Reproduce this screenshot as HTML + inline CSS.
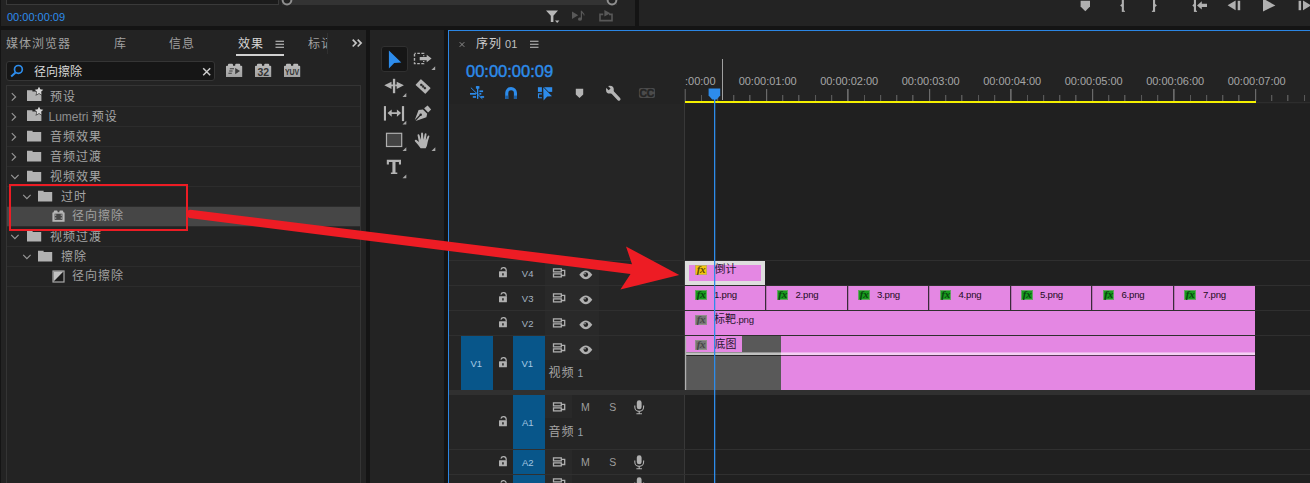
<!DOCTYPE html>
<html lang="zh"><head><meta charset="utf-8"><title>Premiere</title>
<style>
html,body{margin:0;padding:0}
body{width:1310px;height:483px;overflow:hidden;background:#232323;position:relative;font-family:"Liberation Sans","Noto Sans CJK SC",sans-serif}
#r{position:absolute;left:0;top:0;width:1310px;height:483px;overflow:hidden;background:#232323}
#r div,#r svg,#r .t{position:absolute;display:block}
#r .t{white-space:nowrap;line-height:1.5;font-family:"Liberation Sans","Noto Sans CJK SC",sans-serif}
#r .c{letter-spacing:1px}
#r .lat{font-family:"Liberation Sans","Noto Sans CJK SC",sans-serif}
#r .t span{position:static;display:inline}
</style></head><body><div id="r">
<div style="left:0px;top:26px;width:1310px;height:4px;background:#141414;"></div>
<div style="left:635px;top:0px;width:4px;height:26px;background:#141414;"></div>
<div style="left:0px;top:0px;width:1px;height:483px;background:#141414;"></div>
<div style="left:366px;top:30px;width:4px;height:453px;background:#141414;"></div>
<div style="left:444px;top:30px;width:4px;height:453px;background:#141414;"></div>
<div style="left:6px;top:-1px;width:273px;height:6px;background:#1b1b1b;border:1px solid #3a3a3a;box-sizing:border-box;"></div>
<div style="left:282px;top:0px;width:335px;height:5px;background:#333333;"></div>
<svg style="left:280px;top:-7px;" width="14" height="14" viewBox="0 0 14 14"><circle cx="7" cy="7" r="4.400" fill="#232323" stroke="#909090" stroke-width="2"/></svg>
<svg style="left:605px;top:-7px;" width="14" height="14" viewBox="0 0 14 14"><circle cx="7" cy="7" r="4.400" fill="#232323" stroke="#909090" stroke-width="2"/></svg>
<span class="t lat" style="left:7px;top:9px;font-size:11px;color:#2d8ceb;">00:00:00:09</span>
<svg style="left:545px;top:9px;" width="16" height="16" viewBox="0 0 16 16"><path d="M1 1.5h12l-4.6 5.3v6.2h-2.6v-6.2z" fill="#b8b8b8"/><path d="M10 11.5h4.4l-2.2 2.6z" fill="#b8b8b8"/></svg>
<svg style="left:571px;top:10px;" width="16" height="12" viewBox="0 0 16 12"><path d="M1 1.5l6.2 3.7L1 9z" fill="#585858"/><path d="M11 0.8v8.2a2 1.6 0 1 1-1.2-1.4V0.8z M11 0.8c.3 1.8 2.6 2 2.6 4.6h-.9c0-1.6-1.4-1.8-1.7-2.4z" fill="#585858"/></svg>
<svg style="left:598px;top:9px;" width="16" height="14" viewBox="0 0 16 14"><path d="M1.2 4.6h4v1.6H2.8v4.6h10.4V6.2H11V4.6h3.8v7.8H1.2z" fill="#585858"/><path d="M6.4 1l6 3.3-6 3.3z" fill="#585858"/></svg>
<svg style="left:1080px;top:0px;" width="11" height="12" viewBox="0 0 11 12"><path d="M0.600 0.800h9.400v5.800l-4.700 4.600-4.700-4.600z" fill="#b0b0b0"/></svg>
<svg style="left:1110px;top:0px;" width="200" height="14" viewBox="1110 0 200 14"><rect x="1123.600" y="10.700" width="1.300" height="1.200" fill="#b0b0b0"/><rect x="1151.900" y="10.700" width="1.300" height="1.200" fill="#b0b0b0"/><rect x="1195.700" y="10.700" width="1.300" height="1.200" fill="#b0b0b0"/><rect x="1121.800" y="0" width="2.100" height="11.900" fill="#b0b0b0"/><path d="M1122 3.800L1120.100 5.400 1122 7z" fill="#b0b0b0"/><rect x="1153" y="0" width="2.100" height="11.900" fill="#b0b0b0"/><path d="M1155 3.800L1156.900 5.400 1155 7z" fill="#b0b0b0"/><rect x="1193.900" y="0" width="2.100" height="11.900" fill="#b0b0b0"/><path d="M1194 3.800L1192.300 5.400 1194 7z" fill="#b0b0b0"/><path d="M1197 5.400l4.800-4.200v2.500h5.200v3.400h-5.200v2.500z" fill="#b0b0b0"/><path d="M1227.600 5.300l8-4.900v9.800z" fill="#b0b0b0"/><rect x="1237.700" y="0.800" width="2.500" height="9.400" fill="#b0b0b0"/><path d="M1263 -1.500L1275.400 5.500 1263 11.400z" fill="#b0b0b0"/><rect x="1298.600" y="0.800" width="2.500" height="9.400" fill="#b0b0b0"/><path d="M1303 0.400l8 4.900-8 4.900z" fill="#b0b0b0"/></svg>
<span class="t  c" style="left:6px;top:35px;font-size:12px;color:#a0a0a0;">媒体浏览器</span>
<span class="t  c" style="left:114px;top:35px;font-size:12px;color:#a0a0a0;">库</span>
<span class="t  c" style="left:169px;top:35px;font-size:12px;color:#a0a0a0;">信息</span>
<span class="t  c" style="left:238px;top:35px;font-size:12px;color:#d6d6d6;">效果</span>
<svg style="left:275px;top:40px;" width="10" height="9" viewBox="0 0 10 9"><path d="M0.5 1.2h8.5M0.5 4.2h8.5M0.5 7.2h8.5" stroke="#d0d0d0" stroke-width="1.1"/></svg>
<div style="left:236px;top:54px;width:48px;height:2px;background:#d0d0d0;"></div>
<span class="t" style="left:308px;top:35px;font-size:12px;letter-spacing:1px;color:#a0a0a0;width:18.5px;overflow:hidden;height:20px">标记</span>
<div style="left:327px;top:33px;width:1px;height:21px;background:#303030;"></div>
<svg style="left:351px;top:38px;" width="12" height="10" viewBox="0 0 12 10"><path d="M1.700 1.700l3.400 3.400-3.400 3.400M6.700 1.700l3.400 3.400-3.400 3.400" stroke="#c4c4c4" stroke-width="1.700" fill="none"/></svg>
<div style="left:6px;top:61px;width:209px;height:20px;background:#161616;border:1px solid #353535;border-radius:3px;box-sizing:border-box;"></div>
<svg style="left:10px;top:64px;" width="14" height="14" viewBox="0 0 14 14"><circle cx="8.4" cy="5.4" r="3.9" fill="none" stroke="#2d8ceb" stroke-width="1.7"/><path d="M5.6 8.4L1.2 12.4" stroke="#2d8ceb" stroke-width="2"/></svg>
<span class="t " style="left:34px;top:63px;font-size:12px;color:#d8d8d8;">径向擦除</span>
<svg style="left:202px;top:67px;" width="10" height="10" viewBox="0 0 10 10"><path d="M1.200 1.200l7 7M8.200 1.200l-7 7" stroke="#cccccc" stroke-width="1.500"/></svg>
<svg style="left:225px;top:63px;" width="19" height="15" viewBox="0 0 19 15"><defs><linearGradient id="bg225" x1="0" y1="0" x2="0" y2="1"><stop offset="0" stop-color="#bcbcbc"/><stop offset="1" stop-color="#a2a2a2"/></linearGradient></defs><path d="M1 3.400Q1 2.700 2 2.700h1V1.700Q3 .7 4 .7h3Q8 .7 8 1.700v1h2.200v-1Q10.200 .7 11.200 .7h3Q15.200 .7 15.200 1.700v1h1Q17.200 2.700 17.200 3.400V14H1z" fill="url(#bg225)"/></svg>
<svg style="left:254px;top:63px;" width="19" height="15" viewBox="0 0 19 15"><defs><linearGradient id="bg254" x1="0" y1="0" x2="0" y2="1"><stop offset="0" stop-color="#bcbcbc"/><stop offset="1" stop-color="#a2a2a2"/></linearGradient></defs><path d="M1 3.400Q1 2.700 2 2.700h1V1.700Q3 .7 4 .7h3Q8 .7 8 1.700v1h2.200v-1Q10.200 .7 11.200 .7h3Q15.200 .7 15.200 1.700v1h1Q17.200 2.700 17.200 3.400V14H1z" fill="url(#bg254)"/></svg>
<svg style="left:283px;top:63px;" width="19" height="15" viewBox="0 0 19 15"><defs><linearGradient id="bg283" x1="0" y1="0" x2="0" y2="1"><stop offset="0" stop-color="#bcbcbc"/><stop offset="1" stop-color="#a2a2a2"/></linearGradient></defs><path d="M1 3.400Q1 2.700 2 2.700h1V1.700Q3 .7 4 .7h3Q8 .7 8 1.700v1h2.200v-1Q10.200 .7 11.200 .7h3Q15.200 .7 15.200 1.700v1h1Q17.200 2.700 17.200 3.400V14H1z" fill="url(#bg283)"/></svg>
<svg style="left:225px;top:63px;" width="19" height="15" viewBox="0 0 19 15"><path d="M4.800 5.800h4.200M4.200 8h3.400M3.400 10.200h3.400" stroke="#3c3c3c" stroke-width="1.100"/><path d="M10.200 5l4.800 3.100-4.800 3.100z" fill="#3c3c3c"/></svg>
<span class="t lat" style="left:257.5px;top:64.5px;font-size:10.5px;font-weight:bold;color:#333;letter-spacing:0px">32</span>
<span class="t lat" style="left:285.3px;top:65.5px;font-size:9px;font-weight:bold;color:#333;letter-spacing:-.2px;transform:scaleX(.78);transform-origin:0 0">YUV</span>
<div style="left:6px;top:85px;width:355px;height:400px;background:transparent;border:1px solid #343434;box-sizing:border-box;"></div>
<div style="left:7px;top:106px;width:353px;height:1px;background:#2c2c2c;"></div>
<div style="left:7px;top:126px;width:353px;height:1px;background:#2c2c2c;"></div>
<div style="left:7px;top:146px;width:353px;height:1px;background:#2c2c2c;"></div>
<div style="left:7px;top:166px;width:353px;height:1px;background:#2c2c2c;"></div>
<div style="left:7px;top:186px;width:353px;height:1px;background:#2c2c2c;"></div>
<div style="left:7px;top:206px;width:353px;height:1px;background:#2c2c2c;"></div>
<div style="left:7px;top:226px;width:353px;height:1px;background:#2c2c2c;"></div>
<div style="left:7px;top:246px;width:353px;height:1px;background:#2c2c2c;"></div>
<div style="left:7px;top:266px;width:353px;height:1px;background:#2c2c2c;"></div>
<div style="left:7px;top:286px;width:353px;height:1px;background:#2c2c2c;"></div>
<div style="left:7px;top:207px;width:353px;height:19px;background:#464646;"></div>
<svg style="left:11px;top:92px;" width="7" height="10" viewBox="0 0 7 10"><path d="M0.8 1.2l3.8 3.7L0.8 8.600" stroke="#989898" stroke-width="1.15" fill="none"/></svg>
<svg style="left:27px;top:86.5px;" width="17" height="14" viewBox="0 0 17 14"><path d="M0 3.2h5.4v1.3H14.4V14H0z" fill="#b2b2b2"/><path d="M12 -0.4l1.3 2.7 3 .4-2.2 2.05.55 2.95L12 6.200l-2.650 1.500.55-2.950-2.200-2.050 3-.4z" fill="#d4d4d4" stroke="#232323" stroke-width="1.1" paint-order="stroke"/></svg>
<span class="t  c" style="left:50px;top:88px;font-size:12px;color:#a6a6a6;">预设</span>
<svg style="left:11px;top:112px;" width="7" height="10" viewBox="0 0 7 10"><path d="M0.8 1.2l3.8 3.7L0.8 8.600" stroke="#989898" stroke-width="1.15" fill="none"/></svg>
<svg style="left:27px;top:106.5px;" width="17" height="14" viewBox="0 0 17 14"><path d="M0 3.2h5.4v1.3H14.4V14H0z" fill="#b2b2b2"/><path d="M12 -0.4l1.3 2.7 3 .4-2.2 2.05.55 2.95L12 6.200l-2.650 1.500.55-2.950-2.200-2.050 3-.4z" fill="#d4d4d4" stroke="#232323" stroke-width="1.1" paint-order="stroke"/></svg>
<span class="t  c" style="left:48.5px;top:108px;font-size:12px;color:#a6a6a6;"><span class="lat" style="font-size:12px;letter-spacing:0;color:#8e8e8e">Lumetri </span>预设</span>
<svg style="left:11px;top:132px;" width="7" height="10" viewBox="0 0 7 10"><path d="M0.8 1.2l3.8 3.7L0.8 8.600" stroke="#989898" stroke-width="1.15" fill="none"/></svg>
<svg style="left:27px;top:129.5px;" width="15" height="12" viewBox="0 0 15 12"><path d="M0 0.700h5.600v1.300H14.200V11.500H0z" fill="#b2b2b2"/></svg>
<span class="t  c" style="left:50px;top:128px;font-size:12px;color:#a6a6a6;">音频效果</span>
<svg style="left:11px;top:152px;" width="7" height="10" viewBox="0 0 7 10"><path d="M0.8 1.2l3.8 3.7L0.8 8.600" stroke="#989898" stroke-width="1.15" fill="none"/></svg>
<svg style="left:27px;top:149.5px;" width="15" height="12" viewBox="0 0 15 12"><path d="M0 0.700h5.600v1.300H14.200V11.500H0z" fill="#b2b2b2"/></svg>
<span class="t  c" style="left:50px;top:148px;font-size:12px;color:#a6a6a6;">音频过渡</span>
<svg style="left:9.5px;top:173.5px;" width="10" height="7" viewBox="0 0 10 7"><path d="M1.2 0.8l3.7 3.8L8.600 0.8" stroke="#989898" stroke-width="1.15" fill="none"/></svg>
<svg style="left:27px;top:169.5px;" width="15" height="12" viewBox="0 0 15 12"><path d="M0 0.700h5.600v1.300H14.200V11.500H0z" fill="#b2b2b2"/></svg>
<span class="t  c" style="left:50px;top:168px;font-size:12px;color:#a6a6a6;">视频效果</span>
<svg style="left:22.0px;top:193.5px;" width="10" height="7" viewBox="0 0 10 7"><path d="M1.2 0.8l3.7 3.8L8.600 0.8" stroke="#989898" stroke-width="1.15" fill="none"/></svg>
<svg style="left:38px;top:189.5px;" width="15" height="12" viewBox="0 0 15 12"><path d="M0 0.700h5.600v1.300H14.200V11.500H0z" fill="#b2b2b2"/></svg>
<span class="t  c" style="left:61px;top:188px;font-size:12px;color:#a6a6a6;">过时</span>
<svg style="left:51.5px;top:210.2px;" width="14" height="13" viewBox="0 0 14 13"><path d="M0.400 2.900Q.4 2.200 1.200 2.200h.6V1.300Q1.800 .5 2.600 .5h2.200Q5.600 .5 5.600 1.300v.9h1.800v-.9Q7.400 .5 8.200 .5h2.200Q11.200 .5 11.200 1.300v.9h.6Q12.600 2.200 12.600 2.900V11.800H.4z" fill="#b6b6b6"/><rect x="2.600" y="3.700" width="7.800" height="6.200" fill="#464646"/><path d="M3.700 4.600v1.200M3.700 7.600v1.200M9.300 4.600v1.200M9.300 7.600v1.200" stroke="#b6b6b6" stroke-width="1.100"/></svg>
<span class="t  c" style="left:72px;top:207px;font-size:12px;color:#a0a0a0;">径向擦除</span>
<svg style="left:9.5px;top:233.5px;" width="10" height="7" viewBox="0 0 10 7"><path d="M1.2 0.8l3.7 3.8L8.600 0.8" stroke="#989898" stroke-width="1.15" fill="none"/></svg>
<svg style="left:27px;top:229.5px;" width="15" height="12" viewBox="0 0 15 12"><path d="M0 0.700h5.600v1.300H14.200V11.500H0z" fill="#b2b2b2"/></svg>
<span class="t  c" style="left:50px;top:228px;font-size:12px;color:#a6a6a6;">视频过渡</span>
<svg style="left:22.0px;top:253.5px;" width="10" height="7" viewBox="0 0 10 7"><path d="M1.2 0.8l3.7 3.8L8.600 0.8" stroke="#989898" stroke-width="1.15" fill="none"/></svg>
<svg style="left:38px;top:249.5px;" width="15" height="12" viewBox="0 0 15 12"><path d="M0 0.700h5.600v1.300H14.200V11.500H0z" fill="#b2b2b2"/></svg>
<span class="t  c" style="left:61px;top:248px;font-size:12px;color:#a6a6a6;">擦除</span>
<svg style="left:51.5px;top:269.5px;" width="14" height="14" viewBox="0 0 14 14"><rect x="1" y="1" width="11" height="11" fill="#1c1c1c" stroke="#a8a8a8" stroke-width="1.200"/><path d="M1.600 1.600H11.400L1.600 11.400z" fill="#c2c2c2"/></svg>
<span class="t  c" style="left:72px;top:267px;font-size:12px;color:#a0a0a0;">径向擦除</span>
<div style="left:380.5px;top:46.2px;width:27px;height:25.4px;background:#161616;border:1px solid #303030;border-radius:3px;box-sizing:border-box;"></div>
<svg style="left:370px;top:30px;" width="74" height="160" viewBox="370 30 74 160"><path d="M388.900 50.500L401.300 62.500 394.200 63.100 388.900 68.500z" fill="#2d8ceb"/><rect x="414.500" y="53.400" width="9.200" height="10.200" fill="none" stroke="#b4b4b4" stroke-width="1.400" stroke-dasharray="2.600 1.500" stroke-dashoffset="1.300"/><path d="M419.700 56.900h7V54.800l4.900 3.750-4.900 3.750V60.200h-7z" fill="#b4b4b4" stroke="#232323" stroke-width="1.400" paint-order="stroke"/><path d="M435.2 66.2v3.800h-3.800z" fill="#a6a6a6"/><path d="M384.300 85.350l7.200-3.600v2.750h1.500v1.700h-1.500v2.750z M403.900 85.350l-7.200-3.600v2.750h-1.500v1.700h1.500v2.750z" fill="#b4b4b4"/><rect x="392.900" y="78.800" width="2.300" height="14.400" fill="#b4b4b4"/><path d="M406.29999999999995 93.1v3.800h-3.800z" fill="#a6a6a6"/><g transform="translate(423.100 86.500) rotate(43)"><rect x="-6.750" y="-4" width="13.500" height="8" rx=".6" fill="#b4b4b4"/><path d="M-3.600 0l1.200-1.100 1.200 1.100 1.200-1.100 1.200 1.100 1.200-1.100 1.200 1.100-1.200 1.100-1.200-1.100-1.200 1.100-1.200-1.100-1.200 1.100z" fill="#232323" stroke="#232323" stroke-width=".5"/></g><rect x="383.900" y="106.100" width="2.100" height="14.500" fill="#b4b4b4"/><rect x="401.900" y="106.100" width="2.200" height="15" fill="#b4b4b4"/><path d="M387.500 113.100l4.200-3.600v2.800h5.200v-2.800l4.200 3.600-4.200 3.600v-2.800h-5.200v2.800z" fill="#b4b4b4"/><path d="M406.29999999999995 120.7v3.800h-3.800z" fill="#a6a6a6"/><path d="M424.100 108.300l3.500-2.800 3.500 4.100-3 3z" fill="#b4b4b4"/><path d="M422.900 109.400l4.300 4.300-.8 3.600-10.800 3.600 4.700-5a1.250 1.250 0 1 0-.8-.8l-4.700 5 3.800-10z" fill="#b4b4b4"/><rect x="386.500" y="133.300" width="15.200" height="13.200" fill="#444" stroke="#b0b0b0" stroke-width="1.200"/><path d="M406.29999999999995 147.2v3.800h-3.800z" fill="#a6a6a6"/><path d="M420.600 148.200c-1.300-1.800-3.300-4.300-5.500-6.700-.9-1 .3-2.200 1.400-1.400l2.400 1.900-1.300-6.500c-.3-1.300 1.400-1.700 1.800-.5l1.500 4.800.2-6.400c0-1.300 1.800-1.300 1.900 0l.5 6.300 1.200-5.800c.3-1.200 2-.9 1.800.4l-.7 6 1.900-4.300c.5-1.100 2-.5 1.600.7-1.100 3-1.600 5.300-2 7.400-.3 1.500-.7 2.900-1.600 4.100z" fill="#b4b4b4"/><path d="M435.29999999999995 147.2v3.800h-3.800z" fill="#a6a6a6"/><path d="M386.800 159.800H401v4.600h-2.100V162h-3.400v10.400h1.800V174h-6.400v-1.600h1.500V162h-3.500v2.400h-2.100z" fill="#b4b4b4"/><path d="M406.29999999999995 174.4v3.800h-3.800z" fill="#a6a6a6"/></svg>
<div style="left:448px;top:30px;width:862px;height:1px;background:#2b86e4;"></div>
<div style="left:448px;top:30px;width:1px;height:453px;background:#2b86e4;"></div>
<svg style="left:459px;top:41px;" width="7" height="7" viewBox="0 0 7 7"><path d="M0.700 1.200l4.600 4.600M5.300 1.200l-4.600 4.600" stroke="#8c8c8c" stroke-width="1"/></svg>
<span class="t" style="left:476px;top:35px;font-size:12px;letter-spacing:1px;color:#cfcfcf">序列<span class="lat" style="font-size:11px;margin-left:3px;letter-spacing:0;color:#c0c0c0">01</span></span>
<svg style="left:530px;top:40px;" width="10" height="9" viewBox="0 0 10 9"><path d="M0 1.2h8.500M0 4.200h8.500M0 7.200h8.500" stroke="#c4c4c4" stroke-width="1.1"/></svg>
<span class="t lat" style="left:466px;top:59px;font-size:16.5px;color:#2d8ceb;-webkit-text-stroke:.4px #2d8ceb;letter-spacing:0px">00:00:00:09</span>
<svg style="left:460px;top:80px;" width="210" height="30" viewBox="460 80 210 30"><rect x="475.900" y="86.100" width="3.500" height="2.600" fill="#2d8ceb"/><rect x="477" y="86.200" width="1.300" height="12.700" fill="#2d8ceb"/><rect x="479.400" y="90.400" width="3.700" height="1.700" fill="#2d8ceb"/><rect x="470" y="93" width="5.900" height="1.700" fill="#2d8ceb"/><rect x="479.400" y="93" width="1.900" height="1.700" fill="#2d8ceb"/><rect x="472.800" y="96.100" width="3.200" height="1.700" fill="#2d8ceb"/><rect x="480.500" y="96.100" width="3.600" height="1.700" fill="#2d8ceb"/><path d="M470.900 87.700L482.400 98.900" stroke="#2d8ceb" stroke-width="1"/><path d="M505.200 99V92.900a5.900 5.900 0 0 1 11.800 0V99h-3.100V93a2.800 2.800 0 0 0-5.600 0V99z" fill="#2d8ceb"/><rect x="505.200" y="95.600" width="3.100" height="3.400" fill="#1d5fa3"/><rect x="513.900" y="95.600" width="3.100" height="3.400" fill="#1d5fa3"/><rect x="537.900" y="87.200" width="4" height="4.700" fill="#2d8ceb"/><path d="M541.900 93.900h-3.400v3.900h3.400" fill="none" stroke="#2d8ceb" stroke-width="1.100"/><rect x="543" y="87.200" width="9.200" height="4.700" fill="#2d8ceb"/><path d="M543.200 87.300L552 96.200 547.200 96.500 543.600 100.400z" fill="#2d8ceb" stroke="#232323" stroke-width="1.300" paint-order="stroke"/><path d="M575.800 88.700h7.400v5.800l-3.700 3.600-3.700-3.600z" fill="#b4b4b4"/><path d="M611.600 91.400L618.900 99.100" stroke="#b4b4b4" stroke-width="3.300" stroke-linecap="round"/><circle cx="609.900" cy="89.700" r="3.900" fill="#b4b4b4"/><path d="M609.600 89.400L604.600 84.400" stroke="#232323" stroke-width="2.700"/><rect x="638.900" y="88.100" width="16.100" height="9.900" rx="2" fill="#4b4b4b"/><text x="646.800" y="96.800" font-family="Liberation Sans, sans-serif" font-weight="bold" font-size="10.500" text-anchor="middle" fill="#242424" stroke="#242424" stroke-width=".4" letter-spacing="-.3">CC</text></svg>
<svg style="left:448px;top:0px;" width="862" height="110" viewBox="0 0 862 110"><rect x="236" y="89" width="1" height="12" fill="#6a6a6a"/><rect x="237" y="89" width="1" height="12" fill="#6a6a6a" opacity="0.70"/><rect x="253" y="95" width="1" height="6" fill="#585858"/><rect x="254" y="95" width="1" height="6" fill="#585858" opacity="0.00"/><rect x="269" y="95" width="1" height="6" fill="#585858"/><rect x="270" y="95" width="1" height="6" fill="#585858" opacity="0.18"/><rect x="285" y="95" width="1" height="6" fill="#585858"/><rect x="286" y="95" width="1" height="6" fill="#585858" opacity="0.36"/><rect x="301" y="95" width="1" height="6" fill="#585858"/><rect x="302" y="95" width="1" height="6" fill="#585858" opacity="0.54"/><rect x="318" y="89" width="1" height="12" fill="#6a6a6a"/><rect x="319" y="89" width="1" height="12" fill="#6a6a6a" opacity="0.20"/><rect x="334" y="95" width="1" height="6" fill="#585858"/><rect x="335" y="95" width="1" height="6" fill="#585858" opacity="0.30"/><rect x="350" y="95" width="1" height="6" fill="#585858"/><rect x="351" y="95" width="1" height="6" fill="#585858" opacity="0.48"/><rect x="367" y="95" width="1" height="6" fill="#585858"/><rect x="368" y="95" width="1" height="6" fill="#585858" opacity="0.06"/><rect x="383" y="95" width="1" height="6" fill="#585858"/><rect x="384" y="95" width="1" height="6" fill="#585858" opacity="0.24"/><rect x="399" y="89" width="1" height="12" fill="#6a6a6a"/><rect x="400" y="89" width="1" height="12" fill="#6a6a6a" opacity="0.70"/><rect x="416" y="95" width="1" height="6" fill="#585858"/><rect x="417" y="95" width="1" height="6" fill="#585858" opacity="0.00"/><rect x="432" y="95" width="1" height="6" fill="#585858"/><rect x="433" y="95" width="1" height="6" fill="#585858" opacity="0.18"/><rect x="448" y="95" width="1" height="6" fill="#585858"/><rect x="449" y="95" width="1" height="6" fill="#585858" opacity="0.36"/><rect x="464" y="95" width="1" height="6" fill="#585858"/><rect x="465" y="95" width="1" height="6" fill="#585858" opacity="0.54"/><rect x="481" y="89" width="1" height="12" fill="#6a6a6a"/><rect x="482" y="89" width="1" height="12" fill="#6a6a6a" opacity="0.20"/><rect x="497" y="95" width="1" height="6" fill="#585858"/><rect x="498" y="95" width="1" height="6" fill="#585858" opacity="0.30"/><rect x="513" y="95" width="1" height="6" fill="#585858"/><rect x="514" y="95" width="1" height="6" fill="#585858" opacity="0.48"/><rect x="530" y="95" width="1" height="6" fill="#585858"/><rect x="531" y="95" width="1" height="6" fill="#585858" opacity="0.06"/><rect x="546" y="95" width="1" height="6" fill="#585858"/><rect x="547" y="95" width="1" height="6" fill="#585858" opacity="0.24"/><rect x="562" y="89" width="1" height="12" fill="#6a6a6a"/><rect x="563" y="89" width="1" height="12" fill="#6a6a6a" opacity="0.70"/><rect x="579" y="95" width="1" height="6" fill="#585858"/><rect x="580" y="95" width="1" height="6" fill="#585858" opacity="0.00"/><rect x="595" y="95" width="1" height="6" fill="#585858"/><rect x="596" y="95" width="1" height="6" fill="#585858" opacity="0.18"/><rect x="611" y="95" width="1" height="6" fill="#585858"/><rect x="612" y="95" width="1" height="6" fill="#585858" opacity="0.36"/><rect x="627" y="95" width="1" height="6" fill="#585858"/><rect x="628" y="95" width="1" height="6" fill="#585858" opacity="0.54"/><rect x="644" y="89" width="1" height="12" fill="#6a6a6a"/><rect x="645" y="89" width="1" height="12" fill="#6a6a6a" opacity="0.20"/><rect x="660" y="95" width="1" height="6" fill="#585858"/><rect x="661" y="95" width="1" height="6" fill="#585858" opacity="0.30"/><rect x="676" y="95" width="1" height="6" fill="#585858"/><rect x="677" y="95" width="1" height="6" fill="#585858" opacity="0.48"/><rect x="693" y="95" width="1" height="6" fill="#585858"/><rect x="694" y="95" width="1" height="6" fill="#585858" opacity="0.06"/><rect x="709" y="95" width="1" height="6" fill="#585858"/><rect x="710" y="95" width="1" height="6" fill="#585858" opacity="0.24"/><rect x="725" y="89" width="1" height="12" fill="#6a6a6a"/><rect x="726" y="89" width="1" height="12" fill="#6a6a6a" opacity="0.70"/><rect x="742" y="95" width="1" height="6" fill="#585858"/><rect x="743" y="95" width="1" height="6" fill="#585858" opacity="0.00"/><rect x="758" y="95" width="1" height="6" fill="#585858"/><rect x="759" y="95" width="1" height="6" fill="#585858" opacity="0.18"/><rect x="774" y="95" width="1" height="6" fill="#585858"/><rect x="775" y="95" width="1" height="6" fill="#585858" opacity="0.36"/><rect x="790" y="95" width="1" height="6" fill="#585858"/><rect x="791" y="95" width="1" height="6" fill="#585858" opacity="0.54"/><rect x="807" y="89" width="1" height="12" fill="#6a6a6a"/><rect x="808" y="89" width="1" height="12" fill="#6a6a6a" opacity="0.20"/><rect x="823" y="95" width="1" height="6" fill="#585858"/><rect x="824" y="95" width="1" height="6" fill="#585858" opacity="0.30"/><rect x="839" y="95" width="1" height="6" fill="#585858"/><rect x="840" y="95" width="1" height="6" fill="#585858" opacity="0.48"/><rect x="856" y="95" width="1" height="6" fill="#585858"/><rect x="857" y="95" width="1" height="6" fill="#585858" opacity="0.06"/></svg>
<div style="left:685px;top:102px;width:625px;height:1px;background:#2d2d2d;"></div>
<div style="left:685px;top:101px;width:571px;height:2px;background:#f4f000;"></div>
<span class="t lat" style="left:685px;top:73px;font-size:11px;color:#a6a6a6;">:00:00</span>
<span class="t lat" style="left:727.7px;top:73px;width:80px;text-align:center;font-size:11px;color:#a6a6a6">00:00:01:00</span>
<span class="t lat" style="left:809.2px;top:73px;width:80px;text-align:center;font-size:11px;color:#a6a6a6">00:00:02:00</span>
<span class="t lat" style="left:890.7px;top:73px;width:80px;text-align:center;font-size:11px;color:#a6a6a6">00:00:03:00</span>
<span class="t lat" style="left:972.2px;top:73px;width:80px;text-align:center;font-size:11px;color:#a6a6a6">00:00:04:00</span>
<span class="t lat" style="left:1053.7px;top:73px;width:80px;text-align:center;font-size:11px;color:#a6a6a6">00:00:05:00</span>
<span class="t lat" style="left:1135.2px;top:73px;width:80px;text-align:center;font-size:11px;color:#a6a6a6">00:00:06:00</span>
<span class="t lat" style="left:1216.7px;top:73px;width:80px;text-align:center;font-size:11px;color:#a6a6a6">00:00:07:00</span>
<div style="left:722px;top:59px;width:1px;height:41px;background:#a0a0a0;"></div>
<div style="left:449px;top:104px;width:235px;height:379px;background:#252525;"></div>
<div style="left:685px;top:104px;width:625px;height:379px;background:#202020;"></div>
<div style="left:684px;top:89px;width:1px;height:394px;background:#383838;"></div>
<div style="left:449px;top:260px;width:861px;height:1px;background:#2f2f2f;"></div>
<div style="left:449px;top:285px;width:861px;height:1px;background:#2f2f2f;"></div>
<div style="left:449px;top:310px;width:861px;height:1px;background:#2f2f2f;"></div>
<div style="left:449px;top:335px;width:861px;height:1px;background:#2f2f2f;"></div>
<div style="left:449px;top:390px;width:861px;height:5px;background:#303030;"></div>
<div style="left:449px;top:449px;width:861px;height:1px;background:#303030;"></div>
<div style="left:449px;top:474px;width:861px;height:1px;background:#303030;"></div>
<div style="left:545px;top:261px;width:54px;height:24px;background:#292929;"></div>
<div style="left:545px;top:286px;width:54px;height:24px;background:#292929;"></div>
<div style="left:545px;top:311px;width:54px;height:24px;background:#292929;"></div>
<div style="left:545px;top:336px;width:54px;height:24px;background:#292929;"></div>
<div style="left:545px;top:395px;width:27px;height:23px;background:#292929;"></div>
<div style="left:545px;top:450px;width:27px;height:24px;background:#292929;"></div>
<div style="left:545px;top:475px;width:27px;height:8px;background:#292929;"></div>
<svg style="left:498px;top:267px;" width="10" height="11" viewBox="0 0 10 11"><path d="M8.200 4.600V3.300a2.700 2.700 0 0 0 -5.300-.7" fill="none" stroke="#b0b0b0" stroke-width="1.200"/><rect x="1" y="4.300" width="7.900" height="6" rx=".5" fill="#b0b0b0"/><rect x="4.200" y="6.200" width="1.500" height="2.300" fill="#232323"/></svg>
<span class="t lat" style="left:521.8px;top:266.8px;font-size:9.5px;color:#a4b4c2;">V4</span>
<svg style="left:552px;top:268px;" width="14" height="10" viewBox="0 0 14 10"><g fill="none" stroke="#b0b0b0" stroke-width="1.300"><rect x="1.500" y="0.900" width="7.800" height="3"/><rect x="1.500" y="5.900" width="7.800" height="3"/><path d="M9.300 2.300h3.400v5.200H9.300"/></g></svg>
<svg style="left:579px;top:269.5px;" width="14" height="10" viewBox="0 0 14 10"><path d="M0.300 4.800C2.600 1.400 4.800 0.400 6.800 0.400S11 1.400 13.300 4.800C11 8.200 8.800 9.200 6.800 9.200S2.600 8.200 0.300 4.800z" fill="#b0b0b0"/><circle cx="6.800" cy="4.600" r="2.300" fill="#232323"/><circle cx="6" cy="3.800" r=".8" fill="#b0b0b0"/></svg>
<svg style="left:498px;top:292px;" width="10" height="11" viewBox="0 0 10 11"><path d="M8.200 4.600V3.300a2.700 2.700 0 0 0 -5.300-.7" fill="none" stroke="#b0b0b0" stroke-width="1.200"/><rect x="1" y="4.300" width="7.900" height="6" rx=".5" fill="#b0b0b0"/><rect x="4.200" y="6.200" width="1.500" height="2.300" fill="#232323"/></svg>
<span class="t lat" style="left:521.8px;top:291.8px;font-size:9.5px;color:#a4b4c2;">V3</span>
<svg style="left:552px;top:293px;" width="14" height="10" viewBox="0 0 14 10"><g fill="none" stroke="#b0b0b0" stroke-width="1.300"><rect x="1.500" y="0.900" width="7.800" height="3"/><rect x="1.500" y="5.900" width="7.800" height="3"/><path d="M9.300 2.300h3.400v5.200H9.300"/></g></svg>
<svg style="left:579px;top:294.5px;" width="14" height="10" viewBox="0 0 14 10"><path d="M0.300 4.800C2.600 1.400 4.800 0.400 6.800 0.400S11 1.400 13.300 4.800C11 8.200 8.800 9.200 6.800 9.200S2.600 8.200 0.300 4.800z" fill="#b0b0b0"/><circle cx="6.800" cy="4.600" r="2.300" fill="#232323"/><circle cx="6" cy="3.800" r=".8" fill="#b0b0b0"/></svg>
<svg style="left:498px;top:317px;" width="10" height="11" viewBox="0 0 10 11"><path d="M8.200 4.600V3.300a2.700 2.700 0 0 0 -5.300-.7" fill="none" stroke="#b0b0b0" stroke-width="1.200"/><rect x="1" y="4.300" width="7.900" height="6" rx=".5" fill="#b0b0b0"/><rect x="4.200" y="6.200" width="1.500" height="2.300" fill="#232323"/></svg>
<span class="t lat" style="left:521.8px;top:316.8px;font-size:9.5px;color:#a4b4c2;">V2</span>
<svg style="left:552px;top:318px;" width="14" height="10" viewBox="0 0 14 10"><g fill="none" stroke="#b0b0b0" stroke-width="1.300"><rect x="1.500" y="0.900" width="7.800" height="3"/><rect x="1.500" y="5.900" width="7.800" height="3"/><path d="M9.300 2.300h3.400v5.200H9.300"/></g></svg>
<svg style="left:579px;top:319.5px;" width="14" height="10" viewBox="0 0 14 10"><path d="M0.300 4.800C2.600 1.400 4.800 0.400 6.800 0.400S11 1.400 13.300 4.800C11 8.200 8.800 9.200 6.800 9.200S2.600 8.200 0.300 4.800z" fill="#b0b0b0"/><circle cx="6.800" cy="4.600" r="2.300" fill="#232323"/><circle cx="6" cy="3.800" r=".8" fill="#b0b0b0"/></svg>
<div style="left:461px;top:336px;width:32px;height:54px;background:#08568a;"></div>
<div style="left:513px;top:336px;width:32px;height:54px;background:#08568a;"></div>
<span class="t lat" style="left:470.4px;top:356.8px;font-size:9.5px;color:#a9cbe6;">V1</span>
<span class="t lat" style="left:521.4px;top:356.8px;font-size:9.5px;color:#a9cbe6;">V1</span>
<svg style="left:498px;top:356.6px;" width="10" height="11" viewBox="0 0 10 11"><path d="M8.200 4.600V3.300a2.700 2.700 0 0 0 -5.300-.7" fill="none" stroke="#b0b0b0" stroke-width="1.200"/><rect x="1" y="4.300" width="7.900" height="6" rx=".5" fill="#b0b0b0"/><rect x="4.200" y="6.200" width="1.500" height="2.300" fill="#232323"/></svg>
<svg style="left:552px;top:343px;" width="14" height="10" viewBox="0 0 14 10"><g fill="none" stroke="#b0b0b0" stroke-width="1.300"><rect x="1.500" y="0.900" width="7.800" height="3"/><rect x="1.500" y="5.900" width="7.800" height="3"/><path d="M9.300 2.300h3.400v5.200H9.300"/></g></svg>
<svg style="left:579px;top:344.5px;" width="14" height="10" viewBox="0 0 14 10"><path d="M0.300 4.800C2.600 1.400 4.800 0.400 6.800 0.400S11 1.400 13.300 4.800C11 8.200 8.800 9.200 6.800 9.200S2.600 8.200 0.300 4.800z" fill="#b0b0b0"/><circle cx="6.800" cy="4.600" r="2.300" fill="#232323"/><circle cx="6" cy="3.800" r=".8" fill="#b0b0b0"/></svg>
<span class="t" style="left:548.5px;top:363.5px;font-size:12px;letter-spacing:1px;color:#a6a6a6">视频<span class="lat" style="font-size:10.5px;margin-left:3px;color:#96a2ae;letter-spacing:0">1</span></span>
<div style="left:513px;top:395px;width:32px;height:54px;background:#08568a;"></div>
<div style="left:513px;top:450px;width:32px;height:24px;background:#08568a;"></div>
<div style="left:513px;top:475px;width:32px;height:8px;background:#08568a;"></div>
<svg style="left:498px;top:416px;" width="10" height="11" viewBox="0 0 10 11"><path d="M8.200 4.600V3.300a2.700 2.700 0 0 0 -5.300-.7" fill="none" stroke="#b0b0b0" stroke-width="1.200"/><rect x="1" y="4.300" width="7.900" height="6" rx=".5" fill="#b0b0b0"/><rect x="4.200" y="6.200" width="1.500" height="2.300" fill="#232323"/></svg>
<span class="t lat" style="left:522px;top:415.5px;font-size:9.5px;color:#a4c6e0;">A1</span>
<svg style="left:552px;top:402px;" width="14" height="10" viewBox="0 0 14 10"><g fill="none" stroke="#b0b0b0" stroke-width="1.300"><rect x="1.500" y="0.900" width="7.800" height="3"/><rect x="1.500" y="5.900" width="7.800" height="3"/><path d="M9.300 2.300h3.400v5.200H9.300"/></g></svg>
<span class="t lat" style="left:581px;top:399.5px;font-size:10.5px;color:#9e9e9e;">M</span>
<span class="t lat" style="left:609.2px;top:399.5px;font-size:10.5px;color:#9e9e9e;">S</span>
<svg style="left:634px;top:400px;" width="11" height="15" viewBox="0 0 11 15"><rect x="2.800" y="0.300" width="4.800" height="9" rx="2.400" fill="#b0b0b0"/><path d="M0.800 5.400v1.600a4.400 4.400 0 0 0 8.800 0V5.400" fill="none" stroke="#b0b0b0" stroke-width="1.100"/><path d="M5.200 11.400v2.200M2.400 13.800h5.600" stroke="#b0b0b0" stroke-width="1.100"/></svg>
<span class="t" style="left:548.5px;top:422.5px;font-size:12px;letter-spacing:1px;color:#a6a6a6">音频<span class="lat" style="font-size:10.5px;margin-left:3px;color:#96a2ae;letter-spacing:0">1</span></span>
<svg style="left:498px;top:456px;" width="10" height="11" viewBox="0 0 10 11"><path d="M8.200 4.600V3.300a2.700 2.700 0 0 0 -5.300-.7" fill="none" stroke="#b0b0b0" stroke-width="1.200"/><rect x="1" y="4.300" width="7.900" height="6" rx=".5" fill="#b0b0b0"/><rect x="4.200" y="6.200" width="1.500" height="2.300" fill="#232323"/></svg>
<span class="t lat" style="left:522px;top:455.5px;font-size:9.5px;color:#a4c6e0;">A2</span>
<svg style="left:552px;top:457px;" width="14" height="10" viewBox="0 0 14 10"><g fill="none" stroke="#b0b0b0" stroke-width="1.300"><rect x="1.500" y="0.900" width="7.800" height="3"/><rect x="1.500" y="5.900" width="7.800" height="3"/><path d="M9.300 2.300h3.400v5.200H9.300"/></g></svg>
<span class="t lat" style="left:581px;top:454.5px;font-size:10.5px;color:#9e9e9e;">M</span>
<span class="t lat" style="left:609.2px;top:454.5px;font-size:10.5px;color:#9e9e9e;">S</span>
<svg style="left:634px;top:455px;" width="11" height="15" viewBox="0 0 11 15"><rect x="2.800" y="0.300" width="4.800" height="9" rx="2.400" fill="#b0b0b0"/><path d="M0.800 5.400v1.600a4.400 4.400 0 0 0 8.800 0V5.400" fill="none" stroke="#b0b0b0" stroke-width="1.100"/><path d="M5.200 11.400v2.200M2.400 13.800h5.600" stroke="#b0b0b0" stroke-width="1.100"/></svg>
<svg style="left:498px;top:480px;" width="10" height="11" viewBox="0 0 10 11"><path d="M8.200 4.600V3.300a2.700 2.700 0 0 0 -5.300-.7" fill="none" stroke="#b0b0b0" stroke-width="1.200"/><rect x="1" y="4.300" width="7.900" height="6" rx=".5" fill="#b0b0b0"/><rect x="4.200" y="6.200" width="1.500" height="2.300" fill="#232323"/></svg>
<svg style="left:552px;top:478px;" width="14" height="10" viewBox="0 0 14 10"><g fill="none" stroke="#b0b0b0" stroke-width="1.300"><rect x="1.500" y="0.900" width="7.800" height="3"/><rect x="1.500" y="5.900" width="7.800" height="3"/><path d="M9.300 2.300h3.400v5.200H9.300"/></g></svg>
<svg style="left:634px;top:477px;" width="11" height="15" viewBox="0 0 11 15"><rect x="2.800" y="0.300" width="4.800" height="9" rx="2.400" fill="#b0b0b0"/><path d="M0.800 5.400v1.600a4.400 4.400 0 0 0 8.800 0V5.400" fill="none" stroke="#b0b0b0" stroke-width="1.100"/><path d="M5.200 11.400v2.200M2.400 13.800h5.600" stroke="#b0b0b0" stroke-width="1.100"/></svg>
<div style="left:685px;top:261px;width:80px;height:24px;background:#dedede;"></div>
<div style="left:689px;top:265px;width:72px;height:16px;background:#e487e3;"></div>
<span class="t" style="left:695.2px;top:264.5px;width:11.5px;height:10.3px;background:#f6c40c;box-shadow:inset 0 0 0 1px rgba(160,160,150,.6);font-family:'Liberation Serif',serif;font-size:11px;line-height:8.5px;font-style:italic;font-weight:bold;color:#5c4a08;text-align:center;letter-spacing:-.3px;overflow:hidden">fx</span>
<span class="t " style="left:714.5px;top:261px;font-size:11px;color:#2a1630;">倒计</span>
<div style="left:685px;top:286px;width:570px;height:24px;background:#e487e3;"></div>
<span class="t" style="left:695.4000000000001px;top:289.5px;width:11.5px;height:10.3px;background:#179c1d;box-shadow:inset 0 0 0 1px rgba(160,160,150,.6);font-family:'Liberation Serif',serif;font-size:11px;line-height:8.5px;font-style:italic;font-weight:bold;color:#0a4410;text-align:center;letter-spacing:-.3px;overflow:hidden">fx</span>
<span class="t lat" style="left:713.9px;top:287.5px;font-size:9.6px;color:#1c0c22;letter-spacing:-.2px">1.png</span>
<div style="left:765px;top:286px;width:1px;height:24px;background:#3a2a3a;"></div>
<div style="left:766px;top:286px;width:1px;height:24px;background:rgba(58,42,58,.25);"></div>
<span class="t" style="left:776.9000000000001px;top:289.5px;width:11.5px;height:10.3px;background:#179c1d;box-shadow:inset 0 0 0 1px rgba(160,160,150,.6);font-family:'Liberation Serif',serif;font-size:11px;line-height:8.5px;font-style:italic;font-weight:bold;color:#0a4410;text-align:center;letter-spacing:-.3px;overflow:hidden">fx</span>
<span class="t lat" style="left:795.4px;top:287.5px;font-size:9.6px;color:#1c0c22;letter-spacing:-.2px">2.png</span>
<div style="left:847px;top:286px;width:1px;height:24px;background:#3a2a3a;"></div>
<div style="left:848px;top:286px;width:1px;height:24px;background:rgba(58,42,58,.25);"></div>
<span class="t" style="left:858.4000000000001px;top:289.5px;width:11.5px;height:10.3px;background:#179c1d;box-shadow:inset 0 0 0 1px rgba(160,160,150,.6);font-family:'Liberation Serif',serif;font-size:11px;line-height:8.5px;font-style:italic;font-weight:bold;color:#0a4410;text-align:center;letter-spacing:-.3px;overflow:hidden">fx</span>
<span class="t lat" style="left:876.9px;top:287.5px;font-size:9.6px;color:#1c0c22;letter-spacing:-.2px">3.png</span>
<div style="left:928px;top:286px;width:1px;height:24px;background:#3a2a3a;"></div>
<div style="left:929px;top:286px;width:1px;height:24px;background:rgba(58,42,58,.25);"></div>
<span class="t" style="left:939.9000000000001px;top:289.5px;width:11.5px;height:10.3px;background:#179c1d;box-shadow:inset 0 0 0 1px rgba(160,160,150,.6);font-family:'Liberation Serif',serif;font-size:11px;line-height:8.5px;font-style:italic;font-weight:bold;color:#0a4410;text-align:center;letter-spacing:-.3px;overflow:hidden">fx</span>
<span class="t lat" style="left:958.4px;top:287.5px;font-size:9.6px;color:#1c0c22;letter-spacing:-.2px">4.png</span>
<div style="left:1010px;top:286px;width:1px;height:24px;background:#3a2a3a;"></div>
<div style="left:1011px;top:286px;width:1px;height:24px;background:rgba(58,42,58,.25);"></div>
<span class="t" style="left:1021.4000000000001px;top:289.5px;width:11.5px;height:10.3px;background:#179c1d;box-shadow:inset 0 0 0 1px rgba(160,160,150,.6);font-family:'Liberation Serif',serif;font-size:11px;line-height:8.5px;font-style:italic;font-weight:bold;color:#0a4410;text-align:center;letter-spacing:-.3px;overflow:hidden">fx</span>
<span class="t lat" style="left:1039.9px;top:287.5px;font-size:9.6px;color:#1c0c22;letter-spacing:-.2px">5.png</span>
<div style="left:1091px;top:286px;width:1px;height:24px;background:#3a2a3a;"></div>
<div style="left:1092px;top:286px;width:1px;height:24px;background:rgba(58,42,58,.25);"></div>
<span class="t" style="left:1102.9px;top:289.5px;width:11.5px;height:10.3px;background:#179c1d;box-shadow:inset 0 0 0 1px rgba(160,160,150,.6);font-family:'Liberation Serif',serif;font-size:11px;line-height:8.5px;font-style:italic;font-weight:bold;color:#0a4410;text-align:center;letter-spacing:-.3px;overflow:hidden">fx</span>
<span class="t lat" style="left:1121.4px;top:287.5px;font-size:9.6px;color:#1c0c22;letter-spacing:-.2px">6.png</span>
<div style="left:1173px;top:286px;width:1px;height:24px;background:#3a2a3a;"></div>
<div style="left:1174px;top:286px;width:1px;height:24px;background:rgba(58,42,58,.25);"></div>
<span class="t" style="left:1184.4px;top:289.5px;width:11.5px;height:10.3px;background:#179c1d;box-shadow:inset 0 0 0 1px rgba(160,160,150,.6);font-family:'Liberation Serif',serif;font-size:11px;line-height:8.5px;font-style:italic;font-weight:bold;color:#0a4410;text-align:center;letter-spacing:-.3px;overflow:hidden">fx</span>
<span class="t lat" style="left:1202.9px;top:287.5px;font-size:9.6px;color:#1c0c22;letter-spacing:-.2px">7.png</span>
<div style="left:685px;top:311px;width:570px;height:24px;background:#e487e3;"></div>
<span class="t" style="left:695.2px;top:314.5px;width:11.5px;height:10.3px;background:#767676;box-shadow:inset 0 0 0 1px rgba(160,160,150,.6);font-family:'Liberation Serif',serif;font-size:11px;line-height:8.5px;font-style:italic;font-weight:bold;color:#474747;text-align:center;letter-spacing:-.3px;overflow:hidden">fx</span>
<span class="t" style="left:714px;top:311px;font-size:11px;color:#2a1630">标靶<span class="lat" style="font-size:9.6px;letter-spacing:-.2px">.png</span></span>
<div style="left:685px;top:336px;width:570px;height:54px;background:#e487e3;"></div>
<div style="left:685px;top:336px;width:96px;height:54px;background:#595959;"></div>
<div style="left:685px;top:336px;width:57px;height:16px;background:#e487e3;"></div>
<div style="left:685px;top:352px;width:570px;height:1px;background:rgba(255,255,255,.35);"></div>
<div style="left:685px;top:353px;width:570px;height:2px;background:rgba(255,255,255,.62);"></div>
<div style="left:685px;top:355px;width:570px;height:1px;background:rgba(0,0,0,.6);"></div>
<div style="left:685px;top:336px;width:1px;height:54px;background:#b0b0b0;"></div>
<div style="left:686px;top:336px;width:1px;height:54px;background:rgba(176,176,176,.2);"></div>
<span class="t" style="left:695.2px;top:339.5px;width:11.5px;height:10.3px;background:#767676;box-shadow:inset 0 0 0 1px rgba(160,160,150,.6);font-family:'Liberation Serif',serif;font-size:11px;line-height:8.5px;font-style:italic;font-weight:bold;color:#474747;text-align:center;letter-spacing:-.3px;overflow:hidden">fx</span>
<span class="t " style="left:714.5px;top:336px;font-size:11px;color:#2a1630;">底图</span>
<div style="left:1255px;top:390px;width:55px;height:0px;background:#000;"></div>
<div style="left:714px;top:99px;width:1px;height:384px;background:#2d8ceb;"></div>
<div style="left:715px;top:99px;width:1px;height:384px;background:rgba(45,140,235,.28);"></div>
<svg style="left:708px;top:88px;" width="13" height="12" viewBox="0 0 13 12"><path d="M0.600 0.600h11.600v6.800l-3.600 4H4.200l-3.600-4z" fill="#2d8ceb"/></svg>
<div style="left:9px;top:184px;width:179px;height:47px;border:2px solid #ec1c24;box-sizing:border-box"></div>
<svg style="left:0px;top:0px;pointer-events:none" width="1310" height="483" viewBox="0 0 1310 483"><path d="M190.500 209.700Q186.400 210 186.900 214.200 187.300 218 191 218.200L630.500 274 620.400 289.600 679.200 274.900 626 246.500 632 264.200z" fill="#ed1c24"/></svg>
</div></body></html>
